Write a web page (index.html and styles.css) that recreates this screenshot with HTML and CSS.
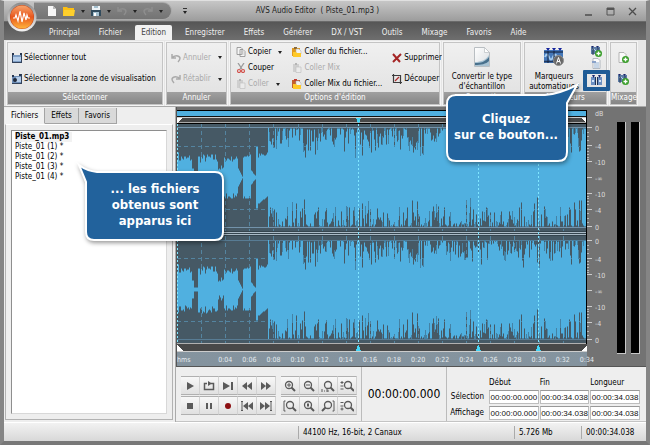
FILE: index.html
```html
<!DOCTYPE html>
<html lang="fr">
<head>
<meta charset="utf-8">
<title>AVS Audio Editor</title>
<link rel="stylesheet" href="styles.css">
</head>
<body>
<svg class="defs" aria-hidden="true">
  <defs>
    <linearGradient id="gOrb" x1="0" y1="0" x2="0" y2="1"><stop offset="0" stop-color="#f7a46c"/><stop offset=".5" stop-color="#e8561c"/><stop offset="1" stop-color="#ffb53c"/></linearGradient>
    <linearGradient id="gRim" x1="0" y1="0" x2="0" y2="1"><stop offset="0" stop-color="#8a8a8a"/><stop offset="1" stop-color="#f4f4f4"/></linearGradient>
    <linearGradient id="gFold" x1="0" y1="0" x2="1" y2="1"><stop offset="0" stop-color="#ffffff"/><stop offset="1" stop-color="#d9dde0"/></linearGradient>
    <symbol id="iSel" viewBox="0 0 10 10"><rect x="0" y="2" width="10" height="7" fill="#7d9dc4"/><rect x="1" y="4" width="8" height="4" fill="#b4cdea"/><path d="M0 0h2v2H0zM8 0h2v2H8z" fill="#27364f"/><path d="M.5 2v8M9.500 2v8M0 9.500h10" stroke="#34445c" fill="none"/></symbol>
    <symbol id="iZone" viewBox="0 0 10 10"><rect x="0" y="2" width="10" height="7" fill="#6f8fb8"/><path d="M4 3h5v5H4z" fill="#b4cdea"/><path d="M0 1h2v2H0zM7 0h3v2H7z" fill="#27364f"/><circle cx="3" cy="6" r="2" fill="#20293a"/><path d="M9.500 1v9M0 9.500h10" stroke="#34445c"/></symbol>
    <symbol id="iUndo" viewBox="0 0 10 10"><path d="M1 1v4h4M1 5c2-3 7-3 8 0 0 2-1 3-2 4" fill="none" stroke="currentColor" stroke-width="1.500"/></symbol>
    <symbol id="iRedo" viewBox="0 0 10 10"><path d="M9 1v4H5M9 5C7 2 2 2 1 5c0 2 1 3 2 4" fill="none" stroke="currentColor" stroke-width="1.500"/></symbol>
    <symbol id="iCopy" viewBox="0 0 10 10"><path d="M1 .5h4l1 1v6H1zM4 2.500h3l2 2v5H4z" fill="#f6f6f6" stroke="#8b8b8b" stroke-width=".8"/><path d="M5 5h3M5 7h3" stroke="#b9b9b9" stroke-width=".7"/></symbol>
    <symbol id="iCut" viewBox="0 0 10 10"><path d="M2 0l4 6M8 0L4 6" stroke="#9b9b9b" stroke-width="1.300"/><circle cx="3" cy="8" r="1.500" fill="none" stroke="#d2524c" stroke-width="1.200"/><circle cx="7" cy="8" r="1.500" fill="none" stroke="#d2524c" stroke-width="1.200"/></symbol>
    <symbol id="iPaste" viewBox="0 0 10 10"><path d="M1 1h6v8H1z" fill="#cfcfcf"/><path d="M3 0h2v2H3z" fill="#b5b5b5"/><path d="M4 4h5v5.500H4z" fill="#ebebeb" stroke="#c2c2c2" stroke-width=".7"/></symbol>
    <symbol id="iPasteFile" viewBox="0 0 10 10"><path d="M0 1h8v8H0z" fill="#e09a20"/><path d="M2 0h3v2H2z" fill="#8a6a3a"/><path d="M4 2h3l2 2v3H4z" fill="#f4f4f4" stroke="#aaa" stroke-width=".5"/><path d="M1 5h3l1 1h4v4H1z" fill="#ffc928"/></symbol>
    <symbol id="iPasteMix" viewBox="0 0 10 10"><path d="M0 1h8v8H0z" fill="#c4602c"/><path d="M2 0h3v2H2z" fill="#c23a30"/><path d="M4 2h3l2 2v3H4z" fill="#f4f4f4" stroke="#aaa" stroke-width=".5"/><path d="M1 5h3l1 1h4v4H1z" fill="#ffc928"/></symbol>
    <symbol id="iDel" viewBox="0 0 10 10"><path d="M1 1l7 8M9 1L1 9" stroke="#a52525" stroke-width="2" fill="none"/></symbol>
    <symbol id="iCrop" viewBox="0 0 10 10"><path d="M1.500 0v8.500H10M0 1.500h8.500V10" stroke="#3c3c3c" stroke-width="1.200" fill="none"/><path d="M3 7l4-4" stroke="#b03030" stroke-width="1.200"/></symbol>
    <symbol id="iConvert" viewBox="0 0 16 20"><path d="M.5.5h10l5 5v14H.5z" fill="url(#gFold)" stroke="#b9bec2"/><path d="M10.500.5v5h5z" fill="#fff" stroke="#b9bec2" stroke-width=".7"/><path d="M1 15c6 0 11-2 14-7v11H1z" fill="#a9c3d3"/><path d="M1 16c6 0 10-1 14-6v4c-3 3-8 4-14 4z" fill="#48708c"/></symbol>
    <symbol id="iMarkers" viewBox="0 0 20 18"><rect x="0" y="2" width="19" height="13" fill="#4478ba"/><path d="M0 4h19M0 13.500h19" stroke="#21385e" stroke-width="1.500"/><path d="M1 9q2-5 4 0t4 0 4 0 5 0" fill="none" stroke="#a5cdf0" stroke-width="2"/><path d="M2 0h4L4 3zM8 0h4l-2 3zM14 0h4l-2 3z" fill="#15259c"/><path d="M4 3v12M10 3v12" stroke="#12203c"/><circle cx="14.500" cy="12.500" r="5" fill="#686868" stroke="#909090"/><path d="M12.500 15.500l2-6 2 6M13.200 13.500h2.600" stroke="#fff" fill="none"/></symbol>
    <symbol id="iMarkAdd" viewBox="0 0 11 11"><rect x="0" y="1" width="9" height="7" fill="#5c7ca6"/><path d="M1 4q2-3 3 0t4 0" stroke="#bcd8f2" fill="none"/><path d="M0 0h3L1.500 2zM5 0h3L6.500 2z" fill="#17266c"/><path d="M2 2v7M7 2v5" stroke="#22324e"/><circle cx="7.500" cy="7.500" r="3.500" fill="#3a9e2b"/><path d="M7.500 5.500v4M5.500 7.500h4" stroke="#fff" stroke-width="1.300"/></symbol>
    <symbol id="iDoc" viewBox="0 0 11 11"><path d="M2 .5h5l2 2v8H2z" fill="#fbfbfb" stroke="#a2a9b2" stroke-width=".8"/><path d="M3 5h5M3 7h5M3 9h5" stroke="#92b0d2"/><path d="M1 3h4v2H1z" fill="#8aa2c8"/></symbol>
    <symbol id="iMarkSplit" viewBox="0 0 11 11"><rect x="0" y="2" width="4" height="8" fill="#6c90c2"/><rect x="7" y="2" width="4" height="8" fill="#6c90c2"/><path d="M4.500 2v8M6.500 2v8" stroke="#1e3358"/><path d="M1 6h2M8 6h2" stroke="#d4e6fa" stroke-width="2"/><path d="M1 0h3L2.500 3zM7 0h3L8.500 3z" fill="#17266c"/></symbol>
    <symbol id="iDocAdd" viewBox="0 0 11 11"><path d="M1 .5h5l2 2v8H1z" fill="#fbfbfb" stroke="#a6a6a6" stroke-width=".8"/><circle cx="7.500" cy="7.500" r="3.500" fill="#3a9e2b"/><path d="M7.500 5.500v4M5.500 7.500h4" stroke="#fff" stroke-width="1.300"/></symbol>
    <symbol id="iMag" viewBox="0 0 14 12"><circle cx="6" cy="5" r="3.500" fill="none" stroke="#5a5a5a" stroke-width="1.300"/><path d="M8.500 7.500L12 11" stroke="#5a5a5a" stroke-width="2"/></symbol>
  </defs>
</svg>

<div class="window">
  <header class="titlebar">
    <button class="orb" aria-label="Menu">
      <svg viewBox="0 0 30 30"><circle cx="15" cy="15" r="14.500" fill="url(#gRim)"/><circle cx="15" cy="15" r="12" fill="#c9471a"/><circle cx="15" cy="15" r="11.500" fill="url(#gOrb)"/><path d="M6 16h2l1-3 2 6 2-10 2 11 2-9 2 7 1-5 1 3h2" fill="none" stroke="#fff" stroke-width="1.200"/></svg>
    </button>
    <div class="quick">
      <button aria-label="Nouveau"><svg viewBox="0 0 10 10"><path d="M1 0h5l3 3v7H1z" fill="#f7f7f7"/><path d="M6 0v3h3z" fill="#bbb"/></svg></button>
      <button class="folder" aria-label="Ouvrir"><svg viewBox="0 0 12 10"><path d="M0 1h4l1 1h6v8H0z" fill="#fdbf12"/><path d="M1 4h11l-1 6H0z" fill="#ffd02c"/></svg><i class="caret"></i></button>
      <button aria-label="Enregistrer"><svg viewBox="0 0 10 10"><path d="M1 0h8v4H1z" fill="#edf3f6"/><path d="M0 4h10v6H0z" fill="#324b5c"/><path d="M3 0h4v2H3zM2 6h6v4H2z" fill="#a4c0cf"/><path d="M3 7h2v3H3z" fill="#fff"/></svg><i class="caret"></i></button>
      <button class="dim" aria-label="Annuler"><svg><use href="#iUndo"/></svg><i class="caret"></i></button>
      <button class="dim" aria-label="Rétablir"><svg><use href="#iRedo"/></svg><i class="caret"></i></button>
    </div>
    <button class="more" aria-label="Personnaliser"><i class="caret"></i></button>
    <h1>AVS Audio Editor&nbsp; ( Piste_01.mp3 )</h1>
    <div class="winbtns">
      <button aria-label="Réduire"><svg viewBox="0 0 9 9"><path d="M1 8h7" stroke="#4c4c4c" stroke-width="1.500"/></svg></button>
      <button aria-label="Agrandir"><svg viewBox="0 0 9 9"><path d="M1 1h7v7H1z" fill="none" stroke="#555"/><path d="M1 2h7" stroke="#555" stroke-width="2"/></svg></button>
      <button aria-label="Fermer"><svg viewBox="0 0 9 9"><path d="M1 1l7 7M8 1L1 8" stroke="#4c4c4c" stroke-width="1.300"/></svg></button>
    </div>
  </header>

  <nav class="menu">
    <a href="#">Principal</a><a href="#">Fichier</a><a href="#" class="active">Edition</a><a href="#">Enregistrer</a><a href="#">Effets</a><a href="#">Générer</a><a href="#">DX / VST</a><a href="#">Outils</a><a href="#">Mixage</a><a href="#">Favoris</a><a href="#">Aide</a>
  </nav>

  <div class="ribbon">
    <section class="group">
      <div class="col two">
        <button><svg><use href="#iSel"/></svg>Sélectionner tout</button>
        <button><svg><use href="#iZone"/></svg>Sélectionner la zone de visualisation</button>
      </div>
      <h2>Sélectionner</h2>
    </section>
    <section class="group">
      <div class="col two undo">
        <button disabled><svg><use href="#iUndo"/></svg>Annuler<i class="caret"></i></button>
        <button disabled><svg><use href="#iRedo"/></svg>Rétablir<i class="caret"></i></button>
      </div>
      <h2>Annuler</h2>
    </section>
    <section class="group edit">
      <div class="cols">
        <div class="col three">
          <button><svg><use href="#iCopy"/></svg>Copier<i class="caret"></i></button>
          <button><svg><use href="#iCut"/></svg>Couper</button>
          <button disabled><svg><use href="#iPaste"/></svg>Coller<i class="caret"></i></button>
        </div>
        <div class="col three">
          <button><svg><use href="#iPasteFile"/></svg>Coller du fichier...</button>
          <button disabled><svg><use href="#iPaste"/></svg>Coller Mix</button>
          <button><svg><use href="#iPasteMix"/></svg>Coller Mix du fichier...</button>
        </div>
        <div class="col two">
          <button><svg><use href="#iDel"/></svg>Supprimer</button>
          <button><svg><use href="#iCrop"/></svg>Découper</button>
        </div>
      </div>
      <h2>Options d'édition</h2>
    </section>
    <section class="group">
      <button class="big"><svg><use href="#iConvert"/></svg>Convertir le type<br>d'échantillon</button>
      <h2>Convertir</h2>
    </section>
    <section class="group markers">
      <div class="cols">
        <button class="big"><svg><use href="#iMarkers"/></svg>Marqueurs<br>automatiques</button>
        <div class="col icons">
          <button aria-label="Ajouter un marqueur"><svg><use href="#iMarkAdd"/></svg></button>
          <button aria-label="Liste des marqueurs"><svg><use href="#iDoc"/></svg></button>
          <button class="marked" aria-label="Diviser par marqueurs"><svg><use href="#iMarkSplit"/></svg></button>
        </div>
      </div>
      <h2>Marqueurs</h2>
    </section>
    <section class="group">
      <div class="col two icons">
        <button aria-label="Mixer un fichier"><svg><use href="#iDocAdd"/></svg></button>
        <button aria-label="Mixer avec les marqueurs"><svg><use href="#iMarkAdd"/></svg></button>
      </div>
      <h2>Mixage</h2>
    </section>
  </div>

  <main class="body">
    <aside class="side">
      <div class="tabs"><button class="on">Fichiers</button><button>Effets</button><button>Favoris</button></div>
      <div class="panel">
        <ul>
          <li class="current">Piste_01.mp3</li>
          <li>Piste_01 (1) *</li>
          <li>Piste_01 (2) *</li>
          <li>Piste_01 (3) *</li>
          <li>Piste_01 (4) *</li>
        </ul>
      </div>
    </aside>

    <div class="work">
      <div class="editor">
        <div class="track">
          <svg id="wave" viewBox="0 0 410 242" preserveAspectRatio="none"></svg>
          <div class="ruler"><span class="unit">hms</span><span>0:04</span><span>0:06</span><span>0:08</span><span>0:10</span><span>0:12</span><span>0:14</span><span>0:16</span><span>0:18</span><span>0:20</span><span>0:22</span><span>0:24</span><span>0:26</span><span>0:28</span><span>0:30</span><span>0:32</span><span>0:34</span></div>
        </div>
        <svg id="scale" viewBox="0 0 28 242"></svg>
        <div class="meters"><i></i><i></i></div>
      </div>

      <div class="controls">
        <div class="pads play">
          <button aria-label="Lecture"><svg viewBox="0 0 14 12"><path d="M4 2l7 4-7 4z"/></svg></button>
          <button aria-label="Boucle"><svg viewBox="0 0 14 12"><path d="M5 3.500H2.500v6h9v-6H9" fill="none" stroke="#5a5a5a" stroke-width="1.500"/><path d="M6 1l4 2.500L6 6z"/></svg></button>
          <button aria-label="Lire jusqu'à la fin"><svg viewBox="0 0 14 12"><path d="M2 2l7 4-7 4zM10 2h2v8h-2z"/></svg></button>
          <button aria-label="Retour"><svg viewBox="0 0 14 12"><path d="M7 2v8L2 6zM12 2v8L7 6z"/></svg></button>
          <button aria-label="Avance"><svg viewBox="0 0 14 12"><path d="M2 2v8l5-4zM7 2v8l5-4z"/></svg></button>
          <button aria-label="Arrêt"><svg viewBox="0 0 14 12"><path d="M4 3h6v6H4z"/></svg></button>
          <button aria-label="Pause"><svg viewBox="0 0 14 12"><path d="M4 3h2v6H4zM8 3h2v6H8z"/></svg></button>
          <button aria-label="Enregistrer"><svg viewBox="0 0 14 12"><circle cx="7" cy="6" r="3" fill="#8c0f12"/></svg></button>
          <button aria-label="Début"><svg viewBox="0 0 14 12"><path d="M8 2v8L3 6zM13 2v8L8 6z"/><path d="M1 1.500h2M1 10.500h2M2 1v10" stroke="#5a5a5a"/></svg></button>
          <button aria-label="Fin"><svg viewBox="0 0 14 12"><path d="M1 2v8l5-4zM6 2v8l5-4z"/><path d="M11 1.500h2M11 10.500h2M12 1v10" stroke="#5a5a5a"/></svg></button>
        </div>
        <div class="pads zoom">
          <button aria-label="Zoom avant"><svg viewBox="0 0 14 12"><use href="#iMag" width="14" height="12"/><path d="M4 5h4M6 3v4" stroke="#5a5a5a"/></svg></button>
          <button aria-label="Zoom arrière"><svg viewBox="0 0 14 12"><use href="#iMag" width="14" height="12"/><path d="M4 5h4" stroke="#5a5a5a"/></svg></button>
          <button aria-label="Zoom 1:1"><svg viewBox="0 0 14 12"><use href="#iMag" x="1" width="14" height="12"/><path d="M1 9v3M3 11h1M5 10h2v2H5" stroke="#5a5a5a" fill="none"/></svg></button>
          <button aria-label="Zoom vertical avant"><svg viewBox="0 0 14 12"><use href="#iMag" x="2" width="14" height="12"/><path d="M2 1v3M.5 2.500h3M.5 6h3M.5 9h3" stroke="#5a5a5a"/></svg></button>
          <button aria-label="Zoom début"><svg viewBox="0 0 14 12"><use href="#iMag" x="1" width="14" height="12"/><path d="M2.500 1H1v10h1.500" fill="none" stroke="#5a5a5a"/></svg></button>
          <button aria-label="Zoom sélection"><svg viewBox="0 0 14 12"><use href="#iMag" width="14" height="12"/><path d="M5 3.500h2v3H5z"/></svg></button>
          <button aria-label="Zoom fin"><svg viewBox="0 0 14 12"><circle cx="7" cy="5" r="3.500" fill="none" stroke="#5a5a5a" stroke-width="1.300"/><path d="M4.500 7.500L1 11" stroke="#5a5a5a" stroke-width="2"/><path d="M11.500 1H13v10h-1.500" fill="none" stroke="#5a5a5a"/></svg></button>
          <button aria-label="Zoom vertical arrière"><svg viewBox="0 0 14 12"><use href="#iMag" x="2" width="14" height="12"/><path d="M.5 2.500h3M.5 6h3M2 7.500v3M.5 9h3" stroke="#5a5a5a"/></svg></button>
        </div>
        <output class="clock">00:00:00.000</output>
        <table class="times">
          <thead><tr><td></td><th scope="col">Début</th><th scope="col">Fin</th><th scope="col">Longueur</th></tr></thead>
          <tbody>
            <tr><th scope="row">Sélection</th><td><input aria-label="Sélection, début" value="00:00:00.000"></td><td><input aria-label="Sélection, fin" value="00:00:34.038"></td><td><input aria-label="Sélection, longueur" value="00:00:34.038"></td></tr>
            <tr><th scope="row">Affichage</th><td><input aria-label="Affichage, début" value="00:00:00.000"></td><td><input aria-label="Affichage, fin" value="00:00:34.038"></td><td><input aria-label="Affichage, longueur" value="00:00:34.038"></td></tr>
          </tbody>
        </table>
      </div>
    </div>
  </main>

  <footer class="status"><span></span><span>44100 Hz, 16-bit, 2 Canaux</span><span>5.726 Mb</span><span>00:00:34.038</span></footer>

  <div class="callout click">
    <svg viewBox="0 0 134 82"><path d="M10 12H100Q114 11 132 2L122 20V69Q122 78 113 78H11Q2 78 2 69V21Q2 12 11 12Z"/></svg>
    <p>Cliquez<br>sur ce bouton...</p>
  </div>
  <div class="callout files">
    <svg viewBox="0 0 148 79"><path d="M2 2Q10 8 20 9H138Q146 9 146 17V69Q146 77 138 77H17Q9 77 9 69V19Z"/></svg>
    <p>... les fichiers<br>obtenus sont<br>apparus ici</p>
  </div>
</div>
<script src="wave.js"></script>
</body>
</html>
```

FILE: styles.css
```css
* { box-sizing: border-box; }
body {
  margin: 0;
  font: 8px/10px "DejaVu Sans Condensed", "DejaVu Sans", sans-serif;
  color: #000;
}
button { font: inherit; color: inherit; background: none; border: 0; padding: 0; margin: 0; display: flex; align-items: center; white-space: nowrap; }
h1, h2, ul, p { margin: 0; padding: 0; font: inherit; }
svg { display: block; flex: none; }
.defs { position: absolute; width: 0; height: 0; }
.caret { width: 0; height: 0; border: 2px solid transparent; border-top: 3px solid #222; border-bottom: 0; }

.window {
  position: relative;
  height: 100vh;
  display: flex;
  flex-direction: column;
  border: solid #858585;
  border-width: 1px 4px 4px;
  border-top-color: #e0e0e0;
  border-bottom-color: #787878;
  background: #eee;
}

.titlebar {
  display: flex;
  align-items: center;
  height: 21px;
  background: linear-gradient(#c6c6c6, #9c9c9c);
  border-bottom: 1px solid #6a6a6a;
  color: #222;
}
.orb { position: absolute; left: 3px; top: 1px; z-index: 2; }
.orb svg { width: 30px; height: 30px; }
.quick {
  display: flex;
  align-items: center;
  gap: 6px;
  height: 18px;
  margin-left: 30px;
  padding: 0 8px 0 13px;
  background: linear-gradient(#878787, #747474);
  border: 1px solid #a9a9a9;
  border-left: 0;
  border-radius: 0 10px 10px 0;
}
.quick svg { width: 10px; height: 10px; }
.quick .folder svg { width: 12px; }
.quick button { gap: 6px; }
.quick .dim { color: #8e8e8e; }
.more { margin-left: 11px; padding-top: 2px; border-top: 1px solid #333; }
h1 { flex: 1; padding-right: 136px; text-align: center; }
.winbtns { display: flex; gap: 13px; padding-right: 9px; }
.winbtns svg { width: 9px; height: 9px; }

.menu {
  display: flex;
  align-items: stretch;
  gap: 1px;
  height: 18px;
  padding: 3px 0 0 36px;
  background: linear-gradient(#565656, #6e6e6e);
}
.menu a { padding: 3px 9px 0; color: #f0f0f0; text-decoration: none; }
.menu .active { margin: 0 3px; padding: 3px 6px 0; background: #f1f1f1; color: #444; border-radius: 2px 2px 0 0; }

.ribbon {
  display: grid;
  grid-template-columns: 156px 61px 210px 78px 83px 27px;
  gap: 3px;
  height: 67px;
  padding: 2px 2px 1px 3px;
  background: #e6e6e6;
  border-bottom: 1px solid #aaa;
}
.group {
  display: flex;
  flex-direction: column;
  min-width: 0;
  background: linear-gradient(#f0f0f0, #e0e0e0);
  border: 1px solid #c4c4c4;
  box-shadow: 0 0 0 1px #f4f4f4;
}
.group > :first-child { flex: 1; }
.group h2 { height: 12px; line-height: 11px; background: linear-gradient(#a0a0a0, #868686); color: #fff; text-align: center; }
.col { display: flex; flex-direction: column; padding: 0 4px; }
.two { justify-content: space-around; padding-top: 4px; padding-bottom: 2px; }
.three { justify-content: space-between; padding-top: 4px; padding-bottom: 3px; }
.col button { gap: 2px; }
.col svg { width: 10px; height: 10px; }
.col .caret { margin-left: 5px; }
.undo button { width: 100%; }
.undo .caret { margin-left: auto; }
.cols { display: flex; justify-content: space-between; }
.edit .col { padding-left: 5px; padding-right: 5px; }
.group :disabled { color: #aaa; }
.big { flex-direction: column; align-items: center; justify-content: flex-end; padding-bottom: 0; text-align: center; }
.group .big svg { width: 20px; height: 20px; margin-bottom: 5px; }
.markers .big { width: 61px; }
.icons { justify-content: space-around; align-items: center; }
.icons svg { width: 11px; height: 11px; }
.markers .icons { padding: 2px 0; margin-right: -4px; }
.icons .marked { padding: 1px 4px; margin-bottom: -2px; border: 4px solid #1f5c96; border-radius: 1px; position: relative; z-index: 1; }

.body { flex: 1; display: flex; min-height: 0; }
.side { width: 172px; display: flex; flex-direction: column; border-right: 1px solid #aaa; }
.tabs { display: flex; height: 17px; padding: 1px 0 0 1px; }
.tabs button { justify-content: center; padding: 0 6px; background: #d9d9d9; border: solid #a4a4a4; border-width: 0 1px 1px 0; }
.tabs .on { background: #f2f2f2; border-bottom-color: #f2f2f2; }
.panel { flex: 1; margin: 0 2px 2px 1px; padding: 5px; border: 1px solid #b2b2b2; border-top-color: #fff; }
.panel ul { height: 100%; padding: 1px 3px; list-style: none; background: #fff; border: 1px solid #a8a8a8; border-color: #8e8e8e #d8d8d8 #d8d8d8 #8e8e8e; line-height: 10px; }
.panel .current { width: 57px; font-weight: bold; white-space: nowrap; background: #f2f2f2; }

.work { flex: 1; display: flex; flex-direction: column; min-width: 0; }
.editor { flex: 1; display: flex; padding-top: 3px; min-height: 0; background: #737373; border-left: 1px solid #555; border-bottom: 1px solid #555; }
.track { flex: 1; display: flex; flex-direction: column; min-width: 0; background: linear-gradient(#8f9da7, #84939e); }
#wave { width: 100%; height: 242px; }
.ruler { display: flex; margin-right: -12px; height: 16px; line-height: 17px; font-size: 7px; color: #e4ebef; }
.ruler span { flex: 24; text-align: center; }
.ruler .unit { flex: 36; text-align: left; }
#scale { width: 28px; height: 242px; font-size: 7px; }
.meters { display: flex; gap: 5px; width: 31px; height: 232px; margin-top: 12px; padding-left: 2px; }
.meters i { width: 9px; background: #000; border: solid #c8c8c8; border-width: 0 1px 1px 0; }

.controls { display: flex; align-items: stretch; height: 55px; padding-top: 9px; border-bottom: 1px solid #c4c4c4; }
.pads { display: grid; grid-auto-rows: 19px; row-gap: 1px; align-content: start; margin-left: 5px; }
.play { grid-template-columns: repeat(5, 19px); }
.zoom { grid-template-columns: repeat(4, 19px); }
.pads button { justify-content: center; background: linear-gradient(#f8f8f8, #e0e0e0); border: solid #b0b0b0; border-width: 1px 1px 1px 0; border-right-color: #d2d2d2; }
.pads svg { width: 14px; height: 12px; fill: #5a5a5a; }
.clock { display: flex; align-items: center; justify-content: center; width: 86px; margin: -9px 0 0 4px; border: solid #bbb; border-width: 0 1px; font-size: 12px; }
.times { width: 192px; margin-left: 2px; border-collapse: separate; border-spacing: 1px 2px; table-layout: fixed; align-self: flex-start; }
.times th, .times td { padding: 0; font-weight: normal; text-align: left; }
.times thead td { width: 38px; }
.times tbody th { text-align: right; padding-right: 4px; }
.times input { display: block; width: 100%; height: 14px; padding: 0; font: 8px/12px "Liberation Sans", sans-serif; text-align: center; color: #111; background: #fff; border: 1px solid #bdbdbd; border-top-color: #999; border-radius: 0; }

.status { display: flex; height: 19px; align-items: center; border-top: 1px solid #fff; background: linear-gradient(#f2f2f2, #d8d8d8); }
.status span { height: 13px; line-height: 13px; padding-left: 4px; border-left: 1px solid #aaa; }
.status span:nth-child(1) { width: 294px; border: 0; }
.status span:nth-child(2) { flex: 1; }
.status span:nth-child(3) { width: 67px; }
.status span:nth-child(4) { width: 65px; }

.callout { position: absolute; z-index: 3; color: #fff; font-size: 13px; font-weight: bold; line-height: 16px; text-align: center; }
.callout svg { position: absolute; inset: 0; width: 100%; height: 100%; overflow: visible; fill: #22629c; stroke: #fff; stroke-width: 2px; filter: drop-shadow(1px 2px 2px rgba(0, 0, 0, .4)); }
.callout p { position: relative; white-space: nowrap; }
.click { right: 67px; top: 82px; width: 134px; height: 82px; padding: 28px 12px 0 0; }
.files { left: 73px; top: 162px; width: 148px; height: 79px; padding: 18px 0 0 8px; }
```

FILE: wave.js
```js
// Draws the two-channel waveform, its grid and markers, and the dB scale.
(function () {
  var seed = 7;
  function rnd() { seed = (seed * 16807) % 2147483647; return seed / 2147483647; }
  var W = 410, FULL = 49;

  // Amplitude of the quiet introduction; null once the loud part starts.
  function intro(x, low) {
    if (x < 15) return 14 + rnd() * 8 + (x < 2 ? 3 : 0);
    if (x < 17) return 8;
    if (x < 21) return 1;
    if (x < 41) return 14 + rnd() * 9;
    if (x < 47) return 5 + rnd() * 6;
    if (x < 61) return 15 + rnd() * 5;
    if (x < 66) return Math.max(0, 8 - (x - 61) * 2);
    if (x < 74) return 18 + rnd() * 6;
    if (x < 79) return Math.max(0, 6 - (x - 74) * 1.3);
    if (x < 81) return 30;
    if (x < 91) return low ? 27 - (x - 79) * 0.8 : 18 + rnd() * 6;
    return null;
  }
  function half(low) {
    var a = [], b = [];
    for (var x = 0; x < W; x++) {
      var v = intro(x, low), e = 1;
      if (v === null) {
        if (x < 98) v = x === 91 ? FULL : 28 + rnd() * 12;
        else v = FULL - 1 - Math.pow(rnd(), low ? 3 : 2.4) * (25 + 5 * Math.sin(x / 9));
        e = rnd() < 0.3 ? 9 : 1;
      }
      v = Math.round(v);
      a.push(v);
      b.push(Math.min(FULL, v + e));
    }
    return [a, b];
  }
  // Closed outline stepping one unit at a time along the top, then back along the bottom.
  function path(top, bottom, cy) {
    var d = "M0 " + cy, x;
    for (x = 0; x < W; x++) d += "V" + (cy - top[x]) + "H" + (x + 1);
    for (x = W - 1; x >= 0; x--) d += "V" + (cy + bottom[x] + 1) + "H" + x;
    return d + "Z";
  }
  function line(x1, y1, x2, y2, c, dash) {
    return '<path d="M' + x1 + " " + y1 + "L" + x2 + " " + y2 + '" stroke="' + c + '"' + (dash ? ' stroke-dasharray="' + dash + '"' : "") + "/>";
  }
  function rect(y, h, c) { return '<rect y="' + y + '" width="410" height="' + h + '" fill="' + c + '"/>'; }

  var s = rect(0, 242, "#465965") + rect(0, 1, "#000") + rect(1, 5, "#50b0e0") + rect(6, 1, "#111") +
    rect(7, 1, "#ccc") + rect(8, 4, "#484848") + rect(12, 1, "#aaa") + rect(13, 1, "#000");
  var up = half(false), dn = half(true), i, x;
  s += line(0, 17.5, W, 17.5, "#7393ab") + line(0, 117.5, W, 117.5, "#7393ab") +
    line(0, 130.5, W, 130.5, "#587c94") + line(0, 229.5, W, 229.5, "#587c94");
  for (i = 1; i < 18; i++) {
    x = Math.round(i * 24.1) + 0.5;
    s += line(x, 14, x, 233, "#5484a0", "4 3");
  }
  [36, 99, 148, 211].forEach(function (y) { s += line(0, y + 0.5, W, y + 0.5, "#5484a0", "4 3"); });
  [67, 179].forEach(function (cy) {
    s += '<path d="' + path(up[1], dn[1], cy) + '" fill="#4482a5"/>';
    s += '<path d="' + path(up[0], dn[0], cy) + '" fill="#50b0e0"/>';
  });
  s += rect(121, 5, "#35454f") + rect(122, 1, "#a9bac6") + rect(124, 1, "#a9bac6");
  s += rect(233, 1, "#b0b0b0") + rect(234, 7, "#484848") + rect(241, 1, "#ccc");
  s += line(0.5, 14, 0.5, 233, "#7fe6ff", "2 2");
  [181, 301, 361].forEach(function (m) {
    s += line(m + 0.5, 14, m + 0.5, 233, "#7fe6ff", "2 2");
    s += '<path d="M' + (m - 2) + " 241l2-6h1l2 6z" + '" fill="#45d5f5"/>';
    s += '<path d="M' + (m - 2) + " 8h5l-2 5h-1z" + '" fill="#45d5f5"/>';
  });
  s += '<path d="M0 8h6l-6 5zM410 8h-6l6 5zM0 241h6l-6-6zM410 241h-6l6-6z" fill="#fff"/>';
  s += '<rect x="409" y="0" width="1" height="234" fill="#000"/>';
  document.getElementById("wave").innerHTML = '<g shape-rendering="crispEdges">' + s + "</g>";

  var t = '<text x="8" y="6" fill="#ddd">dB</text>';
  [17, 130].forEach(function (o) {
    [[0, "0"], [18, "-4"], [34, "-10"], [50, "-∞"], [66, "-10"], [82, "-4"], [99, "0"]].forEach(function (p) {
      t += line(0, o + p[0] + 0.5, 5, o + p[0] + 0.5, "#ccc");
      t += '<text x="8" y="' + (o + p[0] + 4) + '" fill="#ddd">' + p[1] + "</text>";
    });
    [5, 9, 13, 21, 24, 27, 30, 32, 69, 71, 74, 77, 86, 91, 95].forEach(function (y) {
      t += line(0, o + y + 0.5, 2, o + y + 0.5, "#bbb");
    });
  });
  document.getElementById("scale").innerHTML = t;
})();
```
